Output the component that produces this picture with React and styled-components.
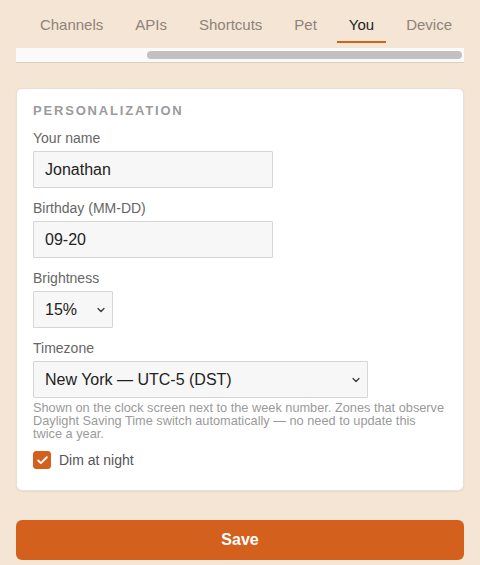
import React, { useLayoutEffect, useRef, useState } from 'react';
import styled, { createGlobalStyle } from 'styled-components';
import { Check, ChevronDown } from 'lucide-react';

const GlobalStyle = createGlobalStyle`
    body {
        margin: 0;
        background: #f5e5d4;
        font-family: "Liberation Sans", Arial, Helvetica, sans-serif;
    }
    * {
        box-sizing: border-box;
    }
`;

const tabs = ['Notifications', 'Display', 'Channels', 'APIs', 'Shortcuts', 'Pet', 'You', 'Device'];

const App = () => {
    const scroller = useRef(null);
    const [active, setActive] = useState('You');
    const [dim, setDim] = useState(true);
    const [thumb, setThumb] = useState({ left: 0, width: 100 });

    // the tab strip is scrolled to its end; the bar below mirrors that
    const syncThumb = () => {
        const el = scroller.current;
        if (!el) return;
        const { scrollLeft, scrollWidth, clientWidth } = el;
        setThumb({
            left: (scrollLeft / scrollWidth) * 100,
            width: (clientWidth / scrollWidth) * 100,
        });
    };

    useLayoutEffect(() => {
        const el = scroller.current;
        if (el) el.scrollLeft = el.scrollWidth;
        syncThumb();
    }, []);

    return (
        <Page>
            <GlobalStyle />
            <TabNav>
                <TabBar ref={scroller} onScroll={syncThumb}>
                    {tabs.map((t) => (
                        <Tab key={t} $active={t === active} onClick={() => setActive(t)}>
                            {t}
                        </Tab>
                    ))}
                </TabBar>
                <ScrollTrack>
                    <ScrollThumb style={{ marginLeft: `${thumb.left}%`, width: `${thumb.width}%` }} />
                </ScrollTrack>
            </TabNav>

            <Card>
                <SectionTitle>Personalization</SectionTitle>

                <Field>
                    <Label>Your name</Label>
                    <TextInput defaultValue="Jonathan" />
                </Field>

                <Field>
                    <Label>Birthday (MM-DD)</Label>
                    <TextInput defaultValue="09-20" />
                </Field>

                <Field>
                    <Label>Brightness</Label>
                    <SelectWrap $width={80}>
                        <Select defaultValue="15">
                            <option value="5">5%</option>
                            <option value="15">15%</option>
                            <option value="50">50%</option>
                            <option value="100">100%</option>
                        </Select>
                        <Chevron size={12} strokeWidth={2.4} />
                    </SelectWrap>
                </Field>

                <Field $last>
                    <Label>Timezone</Label>
                    <SelectWrap $width={335}>
                        <Select defaultValue="ny">
                            <option value="ny">New York — UTC-5 (DST)</option>
                            <option value="ldn">London — UTC+0 (DST)</option>
                        </Select>
                        <Chevron size={12} strokeWidth={2.4} />
                    </SelectWrap>
                    <Hint>
                        Shown on the clock screen next to the week number. Zones that observe
                        Daylight Saving Time switch automatically — no need to update this
                        twice a year.
                    </Hint>
                </Field>

                <CheckRow onClick={() => setDim(!dim)}>
                    <CheckBox $checked={dim}>{dim && <Check size={13} strokeWidth={3.4} />}</CheckBox>
                    Dim at night
                </CheckRow>
            </Card>

            <SaveButton>Save</SaveButton>
        </Page>
    );
};

const Page = styled.div`
    padding: 6px 16px 8px;
`;

const TabNav = styled.nav`
    border-bottom: 1px solid #dccfbf;
`;

const TabBar = styled.div`
    display: flex;
    gap: 8px;
    overflow-x: auto;
    padding-bottom: 5px;
    scrollbar-width: none;

    &::-webkit-scrollbar {
        display: none;
    }
`;

const ScrollTrack = styled.div`
    height: 14px;
    padding: 3px 2px;
    background: #fafafa;
`;

const ScrollThumb = styled.div`
    height: 8px;
    border-radius: 4px;
    background: #c1c1c1;
`;

const Tab = styled.button`
    flex: none;
    background: none;
    border: 0;
    border-bottom: 2px solid ${(p) => (p.$active ? '#d4601e' : 'transparent')};
    padding: 10px 12px 8px;
    font-family: inherit;
    font-size: 15px;
    line-height: 17px;
    color: ${(p) => (p.$active ? '#1f1f1f' : '#8d837b')};
    cursor: pointer;
`;

const Card = styled.section`
    margin-top: 25px;
    background: #fff;
    border: 1px solid #e6e0d8;
    border-radius: 6px;
    box-shadow: 0 1px 2px rgba(0, 0, 0, 0.06);
    padding: 14px 16px 21px;
`;

const SectionTitle = styled.h2`
    margin: 0 0 12px;
    font-size: 13px;
    line-height: 15px;
    font-weight: 700;
    letter-spacing: 0.14em;
    text-transform: uppercase;
    color: #9b9b9b;
`;

const Field = styled.div`
    display: flex;
    flex-direction: column;
    align-items: flex-start;
    margin-bottom: ${(p) => (p.$last ? '0' : '12px')};
`;

const Label = styled.label`
    font-size: 14px;
    line-height: 16px;
    color: #666;
    margin-bottom: 5px;
`;

const TextInput = styled.input`
    width: 240px;
    height: 37px;
    padding: 0 11px;
    background: #f7f7f7;
    border: 1px solid #d6d6d6;
    border-radius: 1px;
    font-family: inherit;
    font-size: 16px;
    color: #222;
    outline: none;
`;

const SelectWrap = styled.div`
    position: relative;
    width: ${(p) => p.$width}px;
`;

const Select = styled.select`
    appearance: none;
    width: 100%;
    height: 37px;
    padding: 0 24px 0 11px;
    background: #f7f7f7;
    border: 1px solid #d6d6d6;
    border-radius: 1px;
    font-family: inherit;
    font-size: 16px;
    color: #222;
    outline: none;
`;

const Chevron = styled(ChevronDown)`
    position: absolute;
    right: 6px;
    top: 13px;
    color: #333;
    pointer-events: none;
`;

const Hint = styled.p`
    margin: 3px 0 0;
    font-size: 12.75px;
    line-height: 13px;
    color: #9a9a9a;
`;

const CheckRow = styled.div`
    display: flex;
    align-items: center;
    gap: 8px;
    margin-top: 11px;
    font-size: 14px;
    line-height: 18px;
    color: #555;
    cursor: pointer;
`;

const CheckBox = styled.span`
    width: 18px;
    height: 18px;
    border-radius: 3px;
    display: flex;
    align-items: center;
    justify-content: center;
    background: ${(p) => (p.$checked ? '#d4601e' : '#fff')};
    border: 1px solid ${(p) => (p.$checked ? '#d4601e' : '#bbb')};
    color: #fff;
`;

const SaveButton = styled.button`
    display: block;
    width: 100%;
    height: 40px;
    margin-top: 29px;
    background: #d4601e;
    border: 0;
    border-radius: 6px;
    color: #fff;
    font-family: inherit;
    font-size: 16px;
    font-weight: 700;
    cursor: pointer;
`;

export default App;
